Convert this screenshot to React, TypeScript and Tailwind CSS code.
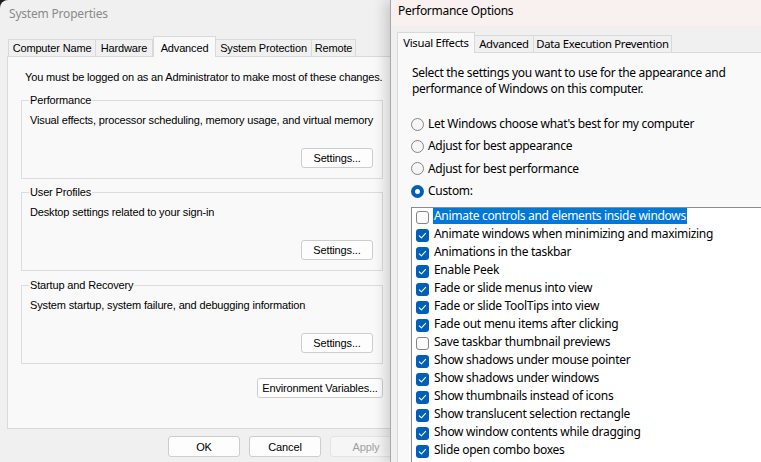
import React from "react";

function LButton({ label, w, disabled }: { label: string; w: string; disabled?: boolean }) {
  return (
    <div
      className={`${w} h-[20px] flex items-center justify-center rounded-[3px] border whitespace-nowrap ${
        disabled ? "border-[#e3e3e3] text-[#a0a0a0] bg-[#f6f6f6]" : "border-[#cdcdcd] text-black bg-[#fdfdfd]"
      } text-[11px] leading-[14px]`}
    >
      {label}
    </div>
  );
}

function Group({ title, text, mt }: { title: string; text: string; mt: string }) {
  return (
    <fieldset className={`${mt} ml-[13px] w-[362px] border border-[#dcdcdc] pl-[8px] pr-[9px] pb-[10px]`}>
      <legend className="px-[1px] -ml-[1px] text-[11px] leading-[14px] whitespace-nowrap">{title}</legend>
      <div className="mt-[6px] text-[11px] leading-[14px] whitespace-nowrap">{text}</div>
      <div className="mt-[21px] flex justify-end">
        <LButton label="Settings..." w="w-[72px]" />
      </div>
    </fieldset>
  );
}

function Check({ checked }: { checked: boolean }) {
  if (!checked)
    return <div className="w-[13px] h-[13px] rounded-[3px] border border-[#858585] bg-[#fbfbfb] shrink-0 mt-[2px]" />;
  return (
    <div className="w-[13px] h-[13px] rounded-[3px] bg-[#005fb8] shrink-0 mt-[2px] flex items-center justify-center">
      <svg width="13" height="13" viewBox="0 0 13 13">
        <polyline points="3.3,6.8 5.4,8.8 9.6,4.4" fill="none" stroke="white" strokeWidth="1.1" strokeLinecap="round" strokeLinejoin="round" />
      </svg>
    </div>
  );
}

function Radio({ label, selected }: { label: string; selected?: boolean }) {
  return (
    <div className="h-[22.3px] flex items-center">
      {selected ? (
        <div className="w-[13px] h-[13px] rounded-full bg-[#005fb8] flex items-center justify-center shrink-0">
          <div className="w-[5px] h-[5px] rounded-full bg-white" />
        </div>
      ) : (
        <div className="w-[13px] h-[13px] rounded-full border border-[#858585] bg-[#f6f6f6] shrink-0" />
      )}
      <span className="ml-[4px] whitespace-nowrap">{label}</span>
    </div>
  );
}

const items: [string, boolean][] = [
  ["Animate controls and elements inside windows", false],
  ["Animate windows when minimizing and maximizing", true],
  ["Animations in the taskbar", true],
  ["Enable Peek", true],
  ["Fade or slide menus into view", true],
  ["Fade or slide ToolTips into view", true],
  ["Fade out menu items after clicking", true],
  ["Save taskbar thumbnail previews", false],
  ["Show shadows under mouse pointer", true],
  ["Show shadows under windows", true],
  ["Show thumbnails instead of icons", true],
  ["Show translucent selection rectangle", true],
  ["Show window contents while dragging", true],
  ["Slide open combo boxes", true],
  ["Smooth edges of screen fonts", true],
  ["Smooth-scroll list boxes", true],
];

export default function App() {
  return (
    <div className="w-[761px] h-[462px] overflow-hidden flex bg-[#1c1c1c]">
      {/* System Properties */}
      <div className="w-[390px] h-[462px] overflow-hidden shrink-0 bg-[#f0f0f0] rounded-tl-[8px] font-['Liberation_Sans',Arial,sans-serif] text-black tracking-[-0.15px]">
        <div className="w-[410px]">
          <div className="h-[28px] flex items-center pl-[9px] text-[12px] tracking-[-0.2px] text-[#8a8a8a] font-['Noto_Sans',sans-serif]">
            System Properties
          </div>
          <div className="pt-[8px] pl-[8px] flex items-end h-[29px] -mb-px text-[11px] whitespace-nowrap">
            <div className="w-[88px] h-[18px] border border-b-0 border-[#d9d9d9] flex items-center justify-center">Computer Name</div>
            <div className="w-[57px] h-[18px] border border-l-0 border-b-0 border-[#d9d9d9] flex items-center justify-center">Hardware</div>
            <div className="relative z-10 w-[63px] h-[21px] border border-b-0 border-[#d9d9d9] bg-[#f9f9f9] flex items-start pt-[3px] justify-center">Advanced</div>
            <div className="w-[96px] h-[18px] border border-l-0 border-b-0 border-[#d9d9d9] flex items-center justify-center">System Protection</div>
            <div className="w-[44px] h-[18px] border border-l-0 border-b-0 border-[#d9d9d9] flex items-center justify-center">Remote</div>
          </div>
          <div className="ml-[7px] w-[390px] h-[373px] border border-[#d9d9d9] bg-[#f9f9f9] pt-[13px]">
            <div className="ml-[17px] text-[11px] leading-[14px] whitespace-nowrap">
              You must be logged on as an Administrator to make most of these changes.
            </div>
            <Group mt="mt-[9px]" title="Performance" text="Visual effects, processor scheduling, memory usage, and virtual memory" />
            <Group mt="mt-[6px]" title="User Profiles" text="Desktop settings related to your sign-in" />
            <Group mt="mt-[7px]" title="Startup and Recovery" text="System startup, system failure, and debugging information" />
            <div className="mt-[14px] ml-[13px] w-[362px] flex justify-end">
              <LButton label="Environment Variables..." w="w-[126px]" />
            </div>
          </div>
          <div className="mt-[7px] pr-[8px] flex justify-end gap-[9px]">
            <LButton label="OK" w="w-[72px] !h-[21px]" />
            <LButton label="Cancel" w="w-[72px] !h-[21px]" />
            <LButton label="Apply" w="w-[72px] !h-[21px]" disabled />
          </div>
        </div>
      </div>

      {/* Performance Options */}
      <div className="relative z-10 flex-1 h-[462px] bg-[#f0f0f0] border-l border-[#a8a8a8] shadow-[-5px_0_12px_rgba(0,0,0,0.16)] font-['Noto_Sans',sans-serif] text-[12px] tracking-[-0.3px] text-black">
        <div className="h-[26px] bg-[#f8f1ef] pl-[7px] leading-[22px] whitespace-nowrap">Performance Options</div>
        <div className="pt-[6px] pl-[6px] flex items-end h-[27px] -mb-px whitespace-nowrap text-[11.3px]">
          <div className="relative z-10 w-[78px] h-[21px] border border-b-0 border-[#d9d9d9] bg-[#f9f9f9] flex justify-center pt-[1px] leading-[17px]">Visual Effects</div>
          <div className="w-[59px] h-[18px] border border-l-0 border-b-0 border-[#d9d9d9] flex items-center justify-center">Advanced</div>
          <div className="w-[138px] h-[18px] border border-l-0 border-b-0 border-[#d9d9d9] flex items-center justify-center">Data Execution Prevention</div>
        </div>
        <div className="ml-[6px] h-[420px] border-l border-t border-[#d9d9d9] bg-[#f9f9f9] pt-[12px] pl-[13px]">
          <div className="pl-[1px] leading-[16px] whitespace-nowrap">
            <div>Select the settings you want to use for the appearance and</div>
            <div>performance of Windows on this computer.</div>
          </div>
          <div className="mt-[16px] flex flex-col">
            <Radio label="Let Windows choose what's best for my computer" />
            <Radio label="Adjust for best appearance" />
            <Radio label="Adjust for best performance" />
            <Radio label="Custom:" selected />
          </div>
          <div className="mt-[5px] h-[300px] border-l border-t border-[#8c8c8c] bg-white pl-[4px] overflow-hidden">
            <div className="-mt-px">
              {items.map(([label, checked], i) => (
                <div key={label} className="h-[18px] flex items-center">
                  <Check checked={checked} />
                  <span
                    className={`ml-[4px] px-[1px] h-[16px] leading-[16px] whitespace-nowrap ${
                      i === 0 ? "bg-[#0078d7] text-white" : ""
                    }`}
                  >
                    {label}
                  </span>
                </div>
              ))}
            </div>
          </div>
        </div>
      </div>
    </div>
  );
}
